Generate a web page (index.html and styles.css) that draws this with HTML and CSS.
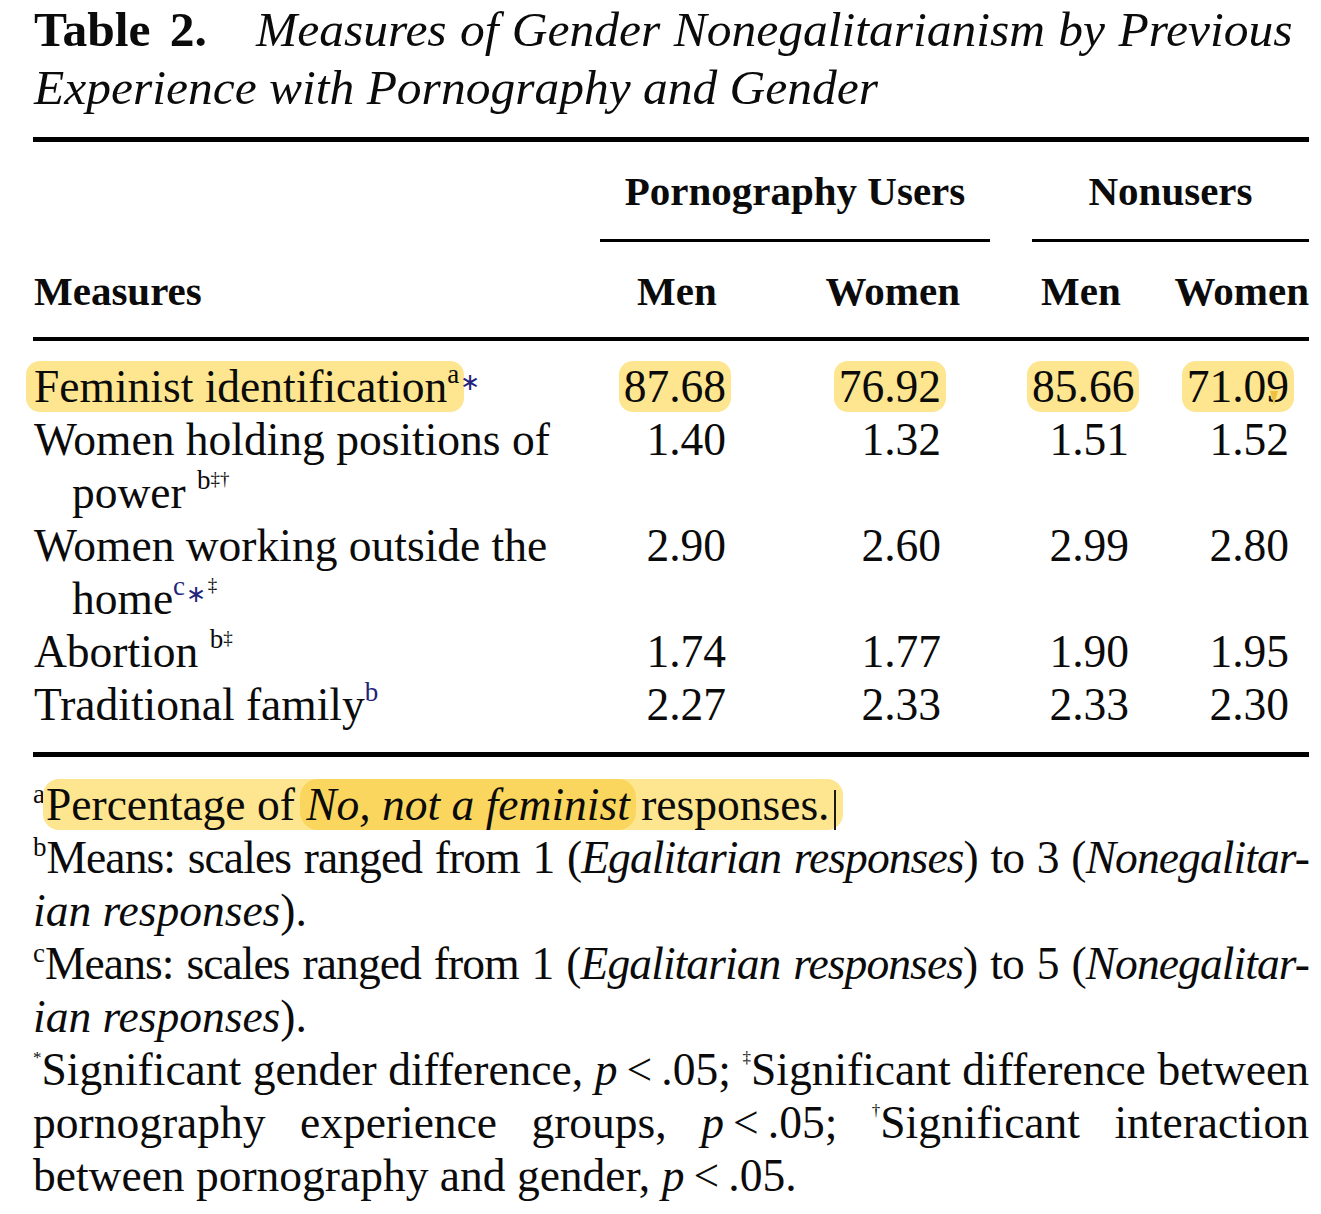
FILE: index.html
```html
<!DOCTYPE html>
<html lang="en">
<head>
<meta charset="utf-8">
<title>Table 2</title>
<link rel="stylesheet" href="styles.css">
</head>
<body>
<div class="page">
  <h1 class="title"><span class="title-num">Table 2.</span><em class="title-l1">Measures of Gender Nonegalitarianism by Previous</em><br><em>Experience with Pornography and Gender</em></h1>

  <div class="thead">
    <div class="blank"></div>
    <div class="gh gh-users">Pornography Users</div>
    <div class="gh gh-non">Nonusers</div>
    <div class="ch ch-label">Measures</div>
    <div class="ch ch-m1">Men</div>
    <div class="ch ch-w1">Women</div>
    <div class="ch ch-m2">Men</div>
    <div class="ch ch-w2">Women</div>
  </div>

  <div class="tbody">
    <div class="lab"><span class="hl hl-label">Feminist identification<sup class="sp">a</sup></span><sup class="sp sp-star navy">∗</sup></div>
    <div class="num n1"><span class="hl hl-num">87.68</span></div>
    <div class="num n2"><span class="hl hl-num">76.92</span></div>
    <div class="num n3"><span class="hl hl-num">85.66</span></div>
    <div class="num n4"><span class="hl hl-num hl-last">71.09<span class="handle"></span></span></div>

    <div class="lab"><span class="ln">Women holding positions of</span><span class="ln ind">power <sup class="sp">b<span class="dg">‡†</span></sup></span></div>
    <div class="num n1">1.40</div>
    <div class="num n2">1.32</div>
    <div class="num n3">1.51</div>
    <div class="num n4">1.52</div>

    <div class="lab"><span class="ln">Women working outside the</span><span class="ln ind">home<sup class="sp navy">c</sup><sup class="sp sp-star navy">∗</sup><sup class="sp"><span class="dg">&#8202;‡</span></sup></span></div>
    <div class="num n1">2.90</div>
    <div class="num n2">2.60</div>
    <div class="num n3">2.99</div>
    <div class="num n4">2.80</div>

    <div class="lab">Abortion <sup class="sp">b<span class="dg">‡</span></sup></div>
    <div class="num n1">1.74</div>
    <div class="num n2">1.77</div>
    <div class="num n3">1.90</div>
    <div class="num n4">1.95</div>

    <div class="lab">Traditional family<sup class="sp navy">b</sup></div>
    <div class="num n1">2.27</div>
    <div class="num n2">2.33</div>
    <div class="num n3">2.33</div>
    <div class="num n4">2.30</div>
  </div>

  <div class="notes">
    <div class="line"><sup class="fn">a</sup><span class="hl hl-note">Percentage of <span class="hl2"><i>No, not a feminist</i></span> responses.<span class="caret"></span></span></div>
    <div class="line j tight"><sup class="fn">b</sup>Means: scales ranged from 1 (<i>Egalitarian responses</i>) to 3 (<i>Nonegalitar-</i></div>
    <div class="line"><i>ian responses</i>).</div>
    <div class="line j tight"><sup class="fn">c</sup>Means: scales ranged from 1 (<i>Egalitarian responses</i>) to 5 (<i>Nonegalitar-</i></div>
    <div class="line"><i>ian responses</i>).</div>
    <div class="line j"><span class="nb"><sup class="fn fn-tiny">*</sup>Significant</span> gender difference, <i>p</i>&#8201;&lt;&#8201;.05; <span class="nb"><sup class="fn fn-tiny">‡</sup>Significant</span> difference between</div>
    <div class="line j">pornography experience groups, <i>p</i>&#8201;&lt;&#8201;.05; <span class="nb"><sup class="fn fn-tiny">†</sup>Significant</span> interaction</div>
    <div class="line">between pornography and gender, <i>p</i>&#8201;&lt;&#8201;.05.</div>
  </div>
</div>
</body>
</html>
```

FILE: styles.css
```css
html, body {
  margin: 0;
  padding: 0;
  background: #ffffff;
}

body {
  color: #0b0b0b;
  font-family: "Liberation Serif", "Times New Roman", serif;
}

.page {
  width: 1276px;
  margin-left: 33px;
  padding-top: 1px;
}

/* ---------- title ---------- */
.title {
  margin: 0 0 20px 0;
  padding-left: 1px;
  font-size: 49.5px;
  line-height: 58px;
  font-weight: normal;
  white-space: nowrap;
}

.title-num {
  font-weight: bold;
  word-spacing: 7px;
  margin-right: 49px;
}

.title em {
  font-style: italic;
}

.title-l1 {
  word-spacing: 1px;
}

/* ---------- table head ---------- */
.thead,
.tbody {
  display: grid;
  grid-template-columns: 567px 195px 195px 42px 138px 139px;
}

.thead {
  border-top: 5px solid #000;
  border-bottom: 4px solid #000;
  font-weight: bold;
  font-size: 41px;
  line-height: 50px;
}

.gh {
  padding: 24px 0 23px;
  text-align: center;
  border-bottom: 3px solid #000;
}

.gh-users {
  grid-column: 2 / 4;
}

.gh-non {
  grid-column: 5 / 7;
}

.ch {
  padding: 24px 0 21px;
}

.ch-label {
  grid-column: 1;
  padding-left: 1px;
}

.ch-m1 {
  grid-column: 2;
  padding-left: 37px;
}

.ch-w1 {
  grid-column: 3;
  text-align: right;
  padding-right: 30px;
}

.ch-m2 {
  grid-column: 5;
  padding-left: 9px;
}

.ch-w2 {
  grid-column: 6;
  text-align: right;
}

/* ---------- table body ---------- */
.tbody {
  padding: 19px 0 21px;
  border-bottom: 5px solid #000;
  font-size: 45.5px;
  line-height: 53px;
}

.lab {
  grid-column: 1;
  padding-left: 1px;
  white-space: nowrap;
}

.ln {
  display: block;
}

.ind {
  padding-left: 38px;
}

.num {
  text-align: right;
  align-self: start;
}

.n1 { grid-column: 2; padding-right: 69px; }
.n2 { grid-column: 3; padding-right: 49px; }
.n3 { grid-column: 5; padding-right: 41px; }
.n4 { grid-column: 6; padding-right: 20px; }

/* superscripts */
.sp {
  font-size: 27px;
  line-height: 0;
  vertical-align: 19px;
}

.sp-star {
  font-size: 24px;
  vertical-align: 12px;
  margin-left: 1px;
}

.dg {
  font-size: 19px;
  vertical-align: 4px;
}

.navy {
  color: #23237a;
}

/* highlights */
.hl {
  background: #fde68f;
  border-radius: 14px;
}

.hl-label {
  padding: 0 5px 0 8px;
  margin: 0 -5px 0 -8px;
}

.hl-num {
  padding: 0 5px;
  margin: 0 -5px;
  position: relative;
}

.handle {
  position: absolute;
  right: 16px;
  top: 30px;
  width: 0;
  height: 0;
  border-left: 4px solid transparent;
  border-right: 4px solid transparent;
  border-top: 14px solid #efbf3e;
}

/* ---------- notes ---------- */
.notes {
  padding-top: 21px;
  font-size: 45.5px;
  line-height: 53px;
}

.line {
  white-space: nowrap;
}

.j {
  text-align: justify;
  text-align-last: justify;
}

.tight {
  letter-spacing: -0.9px;
}

.nb {
  display: inline-block;
}

.fn {
  font-size: 27px;
  line-height: 0;
  vertical-align: 17px;
  letter-spacing: 0;
}

.fn-tiny {
  font-size: 17px;
  vertical-align: 22px;
}

.hl-note {
  padding: 0 7px 0 3px;
  margin-left: -2px;
  border-radius: 16px;
}

.hl2 {
  background: #fbd65e;
  border-radius: 18px;
  padding: 0 6px;
  margin: 0 -6px;
}

.caret {
  display: inline-block;
  width: 2px;
  height: 40px;
  background: #1a1a1a;
  vertical-align: -10px;
  margin-left: 5px;
}
```
